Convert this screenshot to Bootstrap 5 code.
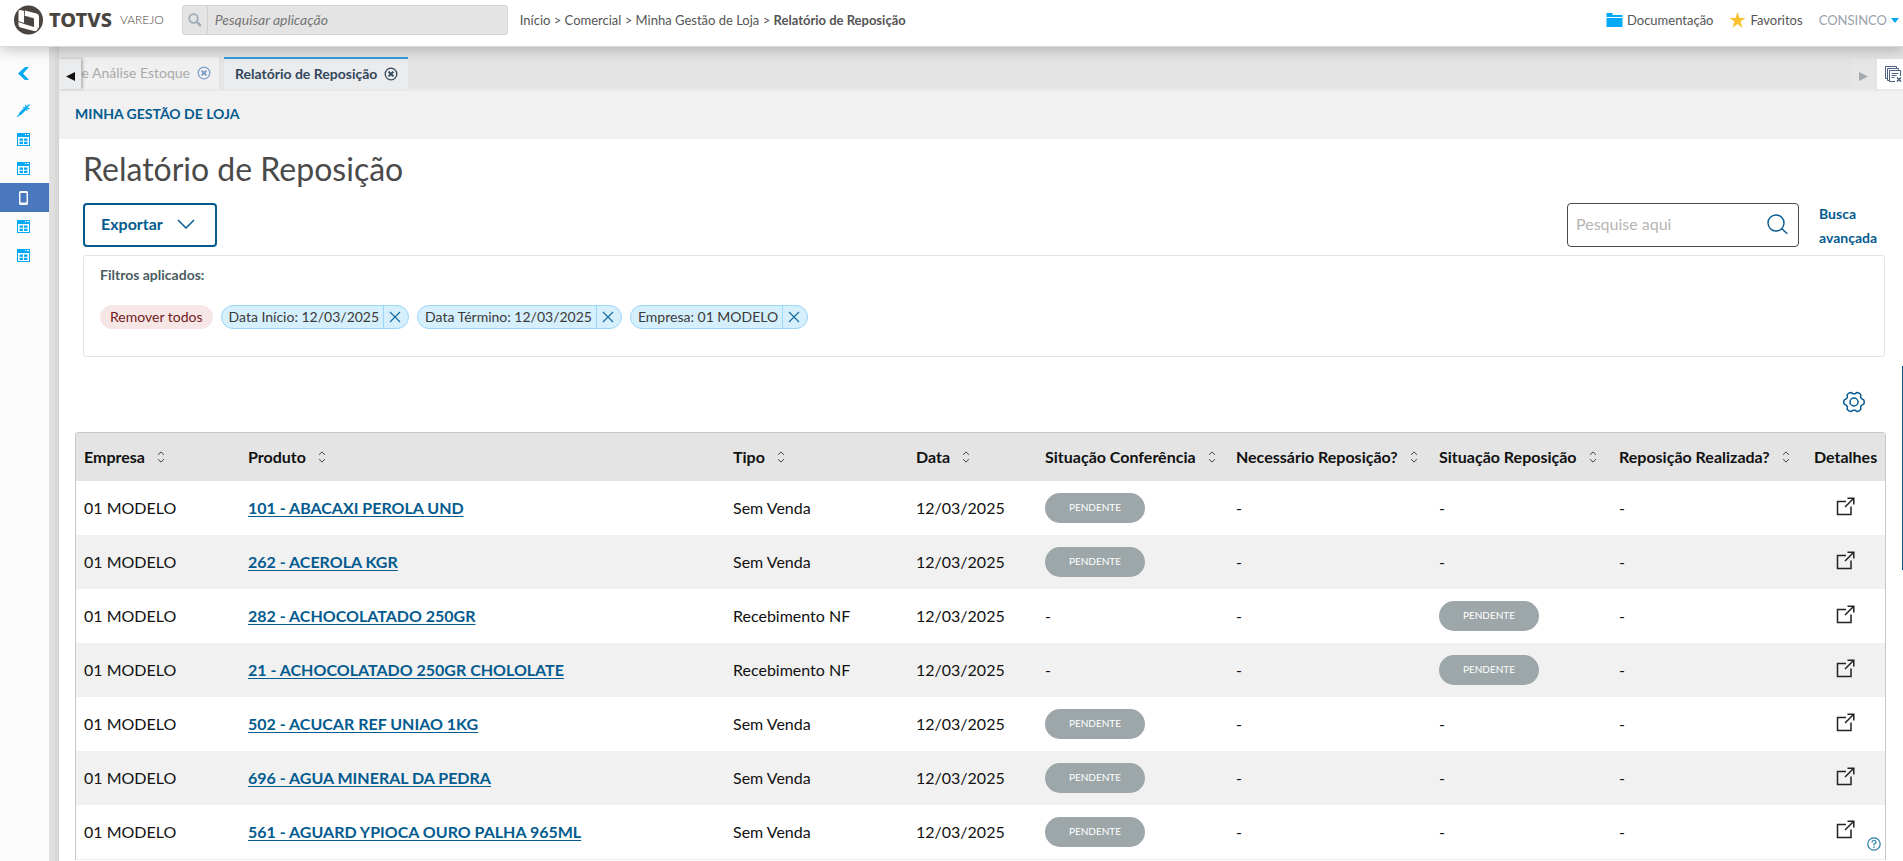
<!DOCTYPE html>
<html lang="pt-BR">
<head>
<meta charset="utf-8">
<meta name="viewport" content="width=device-width, initial-scale=1">
<title>Relatório de Reposição</title>
<link href="https://cdn.jsdelivr.net/npm/bootstrap@5.3.0/dist/css/bootstrap.min.css" rel="stylesheet">
<style>
  :root { --brand: #045b8f; --sky: #03a9f4; }
  body { font-family: Lato, sans-serif; font-size: 16px; line-height: 24px; color: #111; background: #e4e4e4; }
  svg { display: block; flex: none; }
  a { color: inherit; text-decoration: none; }

  /* top bar */
  .topbar { height: 47px; background: #fff; border-bottom: 1px solid #d9d9d9; box-shadow: 0 2px 14px rgba(0,0,0,.25); z-index: 5; font-size: 13px; line-height: 20px; color: #555; padding: 0 4px 6px 14px; }
  .wordmark { font-family: "Noto Sans", sans-serif; font-weight: 800; font-size: 20px; color: #4a4541; margin-left: 6px; }
  .wordmark-sub { font-weight: 300; font-size: 12px; color: #4a4541; }
  .app-search { width: 326px; height: 30px; border: 1px solid #d6d6d6; border-radius: 3px; background: #e4e4e4; overflow: hidden; margin-left: 18px; }
  .app-search label { width: 25px; border-right: 1px solid #cfcfcf; }
  .app-search input { font-style: italic; font-size: 14px; background: none; padding: 0 7px; color: #555; }
  .app-search input::placeholder { color: #757575; }
  .user-menu { color: #9aa1ad; font-size: 13px; }

  /* side rail */
  .rail { width: 49px; background: #fcfcfc; padding-top: 8px; }
  .rail a { height: 29px; color: var(--sky); padding-right: 2px; }
  .rail .rail-back { height: 37px; margin-bottom: 4px; }
  .rail .current { background: #4a78be; color: #f4f6fa; }
  .gutter { width: 10px; background: linear-gradient(90deg, #e0e0e0, #e0e0e0 40%, #d4d4d4); }

  /* tabs */
  .tabstrip { height: 44px; padding-top: 10px; border-bottom: 2px solid #e9e9e9; font-size: 14px; line-height: 20px; }
  .tabstrip button { border: 0; padding: 0; background: none; color: inherit; }
  .scroll-tab { width: 22px; height: 30px; }
  .scroll-left { background: #ebecee !important; color: #33475b; box-shadow: 2px 0 3px rgba(0,0,0,.2); z-index: 1; }
  .scroll-right { background: #e6e6e6 !important; color: #a5abb3 !important; }
  .doc-tab { height: 32px; padding: 2px 10px 0 11px; gap: 7px; }
  .doc-idle { background: #f0f0f0; color: #aaa; padding: 0 8px 0 0; width: 136px; margin: 0 5px 0 2px; white-space: nowrap; }
  .doc-idle button { color: #7b9fc9; }
  .doc-open { background: #ebecee; color: #33475b; font-weight: 700; border-top: 2px solid #349ad9; padding-top: 0; }
  .close-all { width: 26px; height: 30px; background: #fff !important; margin-left: 3px; color: #4c5f7c !important; overflow: hidden; }

  /* page */
  .app-menu { height: 48px; background: #f1f1f1; padding: 0 16px 2px; color: var(--brand); font-size: 14px; font-weight: 700; }
  .page-body { background: #fff; }
  .page-top { padding: 10px 18px 0 24px; }
  h1 { font-size: 32px; line-height: 40px; font-weight: 400; color: #4a4a4a; margin: 0 0 14px; }
  .btn-export { width: 134px; height: 44px; border: 2px solid var(--brand); border-radius: 4px; background: #fff; color: var(--brand); font-weight: 700; padding: 0 16px 2px; }
  .page-search { width: 232px; height: 44px; border: 1px solid #4a4a4a; border-radius: 4px; padding: 0 10px 2px 8px; }
  .page-search input { font-size: 16px; color: #333; min-width: 0; }
  .page-search input::placeholder { color: #b6b6b6; opacity: 1; }
  .advanced { width: 66px; margin: -1px 0 -8px 20px; font-size: 14px; font-weight: 700; color: var(--brand); line-height: 24px; }
  .filters { height: 102px; border: 1px solid #e4e4e4; border-radius: 3px; margin-top: 8px; padding: 7px 16px; font-size: 14px; }
  .filters .caption-line { font-weight: 700; color: #4a5c60; font-size: 14px; margin-bottom: 18px; }
  .chip { height: 24px; border: 1px solid #9bd6f8; border-radius: 12px; background: #d6effd; color: #3a3a3a; overflow: hidden; padding-left: 7px; line-height: 22px; font-size: 14px; }
  .chip button { border: 0; border-left: 1px solid #9bd6f8; background: none; width: 25px; height: 22px; padding: 0 0 0 5px; margin-left: 4px; color: #14699b; }
  .chip-clear { border-color: #f6e6e5; background: #f6e6e5; color: #72211d; padding: 0 9px; }
  .gear { color: var(--brand); border: 0; background: none; padding: 0; margin: 34px 38px 19px 0; }

  /* table */
  .grid-frame { margin: 0 17px 0 16px; border: 1px solid #c8c8c8; border-bottom: 0; border-radius: 4px 4px 0 0; overflow: hidden; }
  .stock { table-layout: fixed; width: 100%; }
  .stock th { background: #e4e4e4; height: 48px; padding: 0 0 0 8px; white-space: nowrap; font-weight: 700; }
  .stock td { height: 54px; padding: 0 0 0 8px; vertical-align: middle; white-space: nowrap; }
  .stock tbody tr:nth-child(even) { background: #f1f1f1; }
  .stock tbody tr:last-child { border-bottom: 1px solid #ececec; }
  .stock td a { font-weight: 700; color: var(--brand); text-decoration: underline; text-underline-offset: 2px; }
  .stock th button { border: 0; background: none; padding: 0; margin-left: 12px; color: #444; }
  .stock td button { border: 0; background: none; padding: 0; margin: 0 0 4px 22px; color: #222; }
  .status { display: block; width: 100px; height: 30px; border-radius: 15px; background: #9da7a9; color: #fff; font-size: 10px; line-height: 29px; text-align: center; }
  .w-emp { width: 164px; } .w-tipo { width: 183px; } .w-data { width: 129px; } .w-conf { width: 191px; }
  .w-nec { width: 203px; } .w-rep { width: 180px; } .w-real { width: 195px; } .w-det { width: 79px; }
  .scroll-thumb { right: 0; top: 366px; width: 1px; height: 204px; background: var(--brand); z-index: 6; }
  .help { right: 22px; bottom: 10px; color: #2a7cab; z-index: 6; }
</style>
</head>
<body>
<svg width="0" height="0" class="position-absolute" aria-hidden="true">
  <symbol id="i-window" viewBox="0 0 13 13"><path fill="currentColor" d="M0 0h13v13H0zM1 4v8h11V4zM8 1v1h1V1zm2 0v1h2V1z" fill-rule="evenodd"/><path fill="currentColor" d="M2.500 5.500h3.500v2.200H2.500zM7 5.500h3.500v2.200H7zM2.500 8.700h3.500v2.200H2.500zM7 8.700h3.500v2.200H7z"/></symbol>
  <symbol id="i-close" viewBox="0 0 14 14"><circle cx="7" cy="7" r="5.800" fill="none" stroke="currentColor" stroke-width="1.300"/><path d="M4.600 4.600l4.800 4.800M9.400 4.600L4.600 9.400" stroke="currentColor" stroke-width="2"/></symbol>
  <symbol id="i-x" viewBox="0 0 12 12"><path d="M1 1l10 10M11 1L1 11" stroke="currentColor" stroke-width="1.100"/></symbol>
  <symbol id="i-sort" viewBox="0 0 8 12"><path d="M1 3.800L4 .9l3 2.900M1 8.200l3 2.900 3-2.900" fill="none" stroke="currentColor"/></symbol>
  <symbol id="i-out" viewBox="0 0 19 19"><path d="M10 4.500H1.500v13h13.500V9.500M11.500 1.200h6.300v6.300M17.500 1.500L9 10" fill="none" stroke="currentColor" stroke-width="1.500"/></symbol>
</svg>

<div class="vh-100 d-flex flex-column overflow-hidden position-relative">
  <header class="topbar d-flex align-items-center position-relative flex-shrink-0">
    <svg width="29" height="30" viewBox="0 0 29 30"><circle cx="14.500" cy="15" r="14.500" fill="#4a4541"/><path d="M6 5l4.500 1v4.500L20 13v8.500l4 1.200q-.5 3.800-4 3.300L6.500 22.500q-2-.7-2-2.500V7q0-2 1.500-2z" fill="#fff"/><path d="M11 5.500l11.500 3q2.500.7 2.500 3v11.500l-5-1.300V13l-10-2.500z" fill="#fff"/><path d="M10 10.500l10 3v8l-10-3z" fill="#4a4541"/><path d="M4.500 16.500l5.500 2 10 3" stroke="#4a4541" fill="none"/><path d="M10.500 5.500v5" stroke="#4a4541" stroke-width=".8"/></svg>
    <span class="wordmark">TOTVS</span>
    <span class="wordmark-sub ms-2">VAREJO</span>
    <div class="app-search d-flex">
      <label for="appq" class="d-flex align-items-center justify-content-center"><svg width="14" height="14" viewBox="0 0 14 14" fill="none" stroke="#9daab8"><circle cx="5.500" cy="5.500" r="4.300" stroke-width="1.800"/><path d="M8.800 8.800l4 4" stroke-width="2.400"/></svg></label>
      <input id="appq" type="text" class="border-0 flex-grow-1" placeholder="Pesquisar aplicação">
    </div>
    <nav class="crumbs ms-2 ps-1 me-auto">Início &gt; Comercial &gt; Minha Gestão de Loja &gt; <b>Relatório de Reposição</b></nav>
    <a href="#" class="d-flex align-items-center gap-1 me-3"><svg width="17" height="14" viewBox="0 0 16 14"><path fill="#03a9f4" d="M0 0h6v2h10v2H0zM0 5h16v9H0z"/></svg>Documentação</a>
    <a href="#" class="d-flex align-items-center gap-1 me-3"><svg width="17" height="16" viewBox="0 0 16 16"><path fill="#fbc02d" d="M8 0l2 6h6l-5 3.600 2 6.200-5-3.800-5 3.800 2-6.200L0 6h6z"/></svg>Favoritos</a>
    <a href="#" class="user-menu d-flex align-items-center gap-1">CONSINCO <svg width="8" height="5" viewBox="0 0 8 5"><path fill="#03a9f4" d="M0 0h8L4 5z"/></svg></a>
  </header>

  <div class="d-flex flex-grow-1 overflow-hidden">
    <nav class="rail d-flex flex-column flex-shrink-0">
      <a href="#" class="rail-back d-flex align-items-center justify-content-center" aria-label="Recolher"><svg width="11" height="13" viewBox="0 0 11 13"><path fill="currentColor" d="M7 0h4L5 6.500l6 6.500H7L0 6.500z"/></svg></a>
      <a href="#" class="d-flex align-items-center justify-content-center" aria-label="Ferramentas"><svg width="13" height="13" viewBox="0 0 13 13"><path d="M.3 12.700l3.200-3.200" stroke="currentColor" stroke-width="1.200"/><path d="M2.800 10.200L8 5" stroke="currentColor" stroke-width="2.800"/><path d="M6.500 3l3.500 3.500M8.500.8l.8 3.200M12.500 4.800l-3.300-.8M8.500 4.500l4-4" stroke="currentColor" stroke-width="1.300"/></svg></a>
      <a href="#" class="d-flex align-items-center justify-content-center" aria-label="Painel 1"><svg width="13" height="13"><use href="#i-window"/></svg></a>
      <a href="#" class="d-flex align-items-center justify-content-center" aria-label="Painel 2"><svg width="13" height="13"><use href="#i-window"/></svg></a>
      <a href="#" class="current d-flex align-items-center justify-content-center" aria-label="Móvel"><svg width="9" height="14" viewBox="0 0 9 14"><path fill="currentColor" fill-rule="evenodd" d="M1 0h7l1 1v12l-1 1H1l-1-1V1zM1.500 2v9.500h6V2z"/></svg></a>
      <a href="#" class="d-flex align-items-center justify-content-center" aria-label="Painel 3"><svg width="13" height="13"><use href="#i-window"/></svg></a>
      <a href="#" class="d-flex align-items-center justify-content-center" aria-label="Painel 4"><svg width="13" height="13"><use href="#i-window"/></svg></a>
    </nav>
    <div class="gutter flex-shrink-0"></div>

    <div class="d-flex flex-column flex-grow-1 overflow-hidden">
      <div class="tabstrip d-flex align-items-end flex-shrink-0">
        <button class="scroll-tab scroll-left position-relative d-flex align-items-center justify-content-center" aria-label="Anterior"><svg width="9" height="9" viewBox="0 0 9 9" class="mt-1"><path fill="currentColor" d="M9 0v9L0 4.500z"/></svg></button>
        <div class="doc-tab doc-idle d-flex align-items-center justify-content-end">e Análise Estoque <button aria-label="Fechar"><svg width="14" height="14"><use href="#i-close"/></svg></button></div>
        <div class="doc-tab doc-open d-flex align-items-center">Relatório de Reposição <button aria-label="Fechar"><svg width="14" height="14"><use href="#i-close"/></svg></button></div>
        <button class="scroll-tab scroll-right ms-auto d-flex align-items-center justify-content-center" aria-label="Próxima"><svg width="9" height="9" viewBox="0 0 9 9" class="mt-1"><path fill="currentColor" d="M0 0v9l9-4.500z"/></svg></button>
        <button class="close-all d-flex align-items-center ps-2" aria-label="Fechar todas"><svg width="17" height="16" viewBox="0 0 17 16" fill="none" stroke="currentColor"><path d="M2.500 12.500h-2V.5h11v2M4.500 14.500h-2v-12h11v2"/><path d="M10 15.500H4.500v-11h11V10M6.500 7.500h7M6.500 9.500h5M6.500 11.500h3"/><path d="M12 11.500l4 4M16 11.500l-4 4" stroke-width="1.500"/></svg></button>
      </div>

      <div class="app-menu d-flex align-items-center flex-shrink-0"><a href="#">MINHA GESTÃO DE LOJA</a></div>

      <main class="page-body flex-grow-1 overflow-hidden">
        <div class="page-top">
          <h1>Relatório de Reposição</h1>
          <div class="d-flex align-items-start">
            <button class="btn-export d-flex align-items-center justify-content-between"><span>Exportar</span><svg width="18" height="10" viewBox="0 0 18 10" class="me-1"><path d="M1 1l8 8 8-8" fill="none" stroke="currentColor" stroke-width="1.500"/></svg></button>
            <div class="page-search d-flex align-items-center ms-auto">
              <input id="q" type="text" class="border-0 flex-grow-1 p-0" placeholder="Pesquise aqui" aria-label="Pesquise aqui">
              <svg width="21" height="21" viewBox="0 0 21 21" fill="none" stroke="#045b8f" stroke-width="1.400"><circle cx="9" cy="9" r="8"/><path d="M14.800 14.800l5.500 5"/></svg>
            </div>
            <a href="#" class="advanced">Busca avançada</a>
          </div>
          <section class="filters">
            <div class="caption-line">Filtros aplicados:</div>
            <div class="d-flex gap-2">
              <button class="chip chip-clear">Remover todos</button>
              <span class="chip d-flex">Data Início: 12/03/2025<button aria-label="Remover"><svg width="12" height="12"><use href="#i-x"/></svg></button></span>
              <span class="chip d-flex">Data Término: 12/03/2025<button aria-label="Remover"><svg width="12" height="12"><use href="#i-x"/></svg></button></span>
              <span class="chip d-flex">Empresa: 01 MODELO<button aria-label="Remover"><svg width="12" height="12"><use href="#i-x"/></svg></button></span>
            </div>
          </section>
        </div>
        <div class="d-flex justify-content-end">
          <button class="gear" aria-label="Configurar colunas"><svg width="22" height="22" viewBox="0 0 22 22" fill="none" stroke="currentColor" stroke-width="1.500" stroke-linejoin="round"><circle cx="11" cy="11" r="4"/><path d="M20.700 8.800Q21.800 11 20.700 13.200L18.500 14.300 17.600 15.800 17.800 18.300Q16.500 20.300 13.900 20.600L11.900 19.200H10.100L8.100 20.600Q5.500 20.300 4.200 18.300L4.400 15.800 3.500 14.300 1.300 13.200Q.2 11 1.300 8.800L3.500 7.700 4.400 6.200 4.200 3.700Q5.500 1.700 8.100 1.400L10.100 2.800H11.900L13.900 1.400Q16.500 1.700 17.800 3.700L17.600 6.200 18.500 7.700Z"/></svg></button>
        </div>
        <div class="grid-frame">
          <table class="stock">
            <colgroup><col class="w-emp"><col><col class="w-tipo"><col class="w-data"><col class="w-conf"><col class="w-nec"><col class="w-rep"><col class="w-real"><col class="w-det"></colgroup>
            <thead><tr id="heads"></tr></thead>
            <tbody id="rows"></tbody>
          </table>
        </div>
      </main>
    </div>
  </div>

  <div class="scroll-thumb position-absolute"></div>
  <a href="#" class="help position-absolute" aria-label="Ajuda"><svg width="14" height="14" viewBox="0 0 14 14" fill="none" stroke="currentColor" stroke-width="1.200"><circle cx="7" cy="7" r="6.200"/><path d="M5 5.500q0-2 2-2t2 1.800Q9 6.500 7 7v1.500M7 9.500V11"/></svg></a>
</div>

<script src="https://cdn.jsdelivr.net/npm/bootstrap@5.3.0/dist/js/bootstrap.bundle.min.js"></script>
<script>
  const sort = '<button aria-label="Ordenar"><svg width="8" height="12"><use href="#i-sort"/></svg></button>';
  const heads = ['Empresa', 'Produto', 'Tipo', 'Data', 'Situação Conferência', 'Necessário Reposição?', 'Situação Reposição', 'Reposição Realizada?', 'Detalhes'];
  document.getElementById('heads').innerHTML = heads.map((h, i) =>
    `<th scope="col"><span class="d-flex align-items-center">${h}${i < 8 ? sort : ''}</span></th>`).join('');

  const sale = 'Sem Venda', receipt = 'Recebimento NF';
  const items = [
    ['101 - ABACAXI PEROLA UND', sale], ['262 - ACEROLA KGR', sale],
    ['282 - ACHOCOLATADO 250GR', receipt], ['21 - ACHOCOLATADO 250GR CHOLOLATE', receipt],
    ['502 - ACUCAR REF UNIAO 1KG', sale], ['696 - AGUA MINERAL DA PEDRA', sale],
    ['561 - AGUARD YPIOCA OURO PALHA 965ML', sale]
  ];
  const status = '<span class="status">PENDENTE</span>';
  document.getElementById('rows').innerHTML = items.map(([name, type]) => `<tr>
    <td>01 MODELO</td><td><a href="#">${name}</a></td><td>${type}</td><td>12/03/2025</td>
    <td>${type === sale ? status : '-'}</td><td>-</td><td>${type === receipt ? status : '-'}</td><td>-</td>
    <td><button class="d-block" aria-label="Detalhes"><svg width="19" height="19"><use href="#i-out"/></svg></button></td></tr>`).join('');
</script>
</body>
</html>
